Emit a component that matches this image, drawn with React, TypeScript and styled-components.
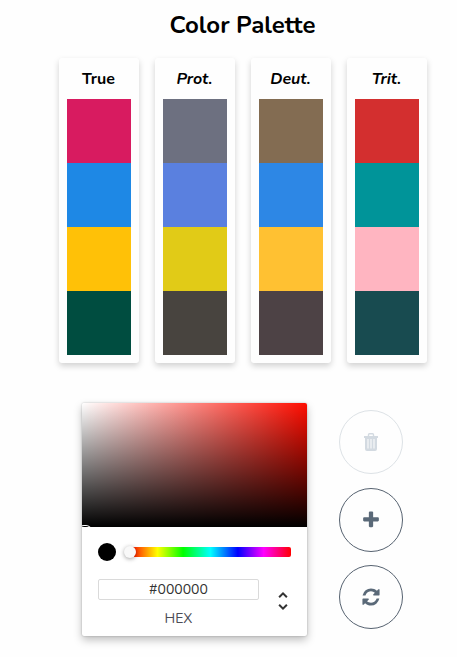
import React, { useState } from "react";
import styled, { createGlobalStyle } from "styled-components";

const GlobalStyle = createGlobalStyle`
  *, *::before, *::after { box-sizing: border-box; }
  body {
    margin: 0;
    background: #fefefe;
    color: #000;
    font-family: "Nunito", "Lato", "Noto Sans", sans-serif;
  }
`;

const Page = styled.main`
  display: flex;
  flex-direction: column;
  align-items: center;
  padding: 8px 0 20px 28px;
`;

const Title = styled.h1`
  margin: 0 0 16px;
  font-size: 24px;
  line-height: 34px;
  font-weight: 700;
`;

const Palettes = styled.section`
  display: flex;
  gap: 16px;
`;

const Card = styled.article`
  padding: 8px;
  border-radius: 3px;
  background: #fefefe;
  box-shadow: 0 3px 6px rgba(0, 0, 0, 0.18);
`;

const CardTitle = styled.h2<{ $simulated: boolean }>`
  margin: 0 0 7px;
  font-size: 16px;
  line-height: 26px;
  font-weight: 700;
  text-align: center;
  font-style: ${(p) => (p.$simulated ? "italic" : "normal")};
`;

const Swatch = styled.div<{ $color: string }>`
  width: 64px;
  height: 64px;
  background: ${(p) => p.$color};
`;

const Editor = styled.section`
  display: flex;
  gap: 32px;
  margin-top: 40px;
`;

const Picker = styled.div`
  width: 225px;
  border-radius: 2px;
  background: #fff;
  box-shadow: 0 0 2px rgba(0, 0, 0, 0.25), 0 4px 8px rgba(0, 0, 0, 0.25);
`;

const Saturation = styled.div`
  position: relative;
  height: 124px;
  overflow: hidden;
  border-radius: 2px 2px 0 0;
  background: linear-gradient(to top, #000, transparent),
    linear-gradient(to right, #fff, rgba(255, 255, 255, 0)), #fe0d00;
`;

const SaturationPointer = styled.span`
  position: absolute;
  left: -4px;
  bottom: -10px;
  width: 14px;
  height: 12px;
  border-radius: 6px;
  box-shadow: inset 0 0 0 1px #fff;
`;

const Controls = styled.div`
  padding: 16px 16px 7px;
`;

const HueRow = styled.div`
  display: flex;
  align-items: center;
  gap: 8px;
`;

const CurrentColor = styled.span`
  width: 18px;
  height: 18px;
  border-radius: 50%;
  background: #000;
`;

const HueSlider = styled.input`
  appearance: none;
  flex: 1;
  min-width: 0;
  height: 10px;
  margin: 0;
  border-radius: 2px;
  background: linear-gradient(to right, #f00, #ff0 17%, #0f0 33%, #0ff 50%, #00f 67%, #f0f 83%, #f00)
    right / calc(100% - 6px) 100% no-repeat;

  &::-webkit-slider-thumb {
    appearance: none;
    width: 12px;
    height: 12px;
    border-radius: 50%;
    background: #f8f8f8;
    box-shadow: 0 1px 4px rgba(0, 0, 0, 0.37);
  }
`;

const Fields = styled.div`
  display: flex;
  align-items: flex-start;
  justify-content: space-between;
  margin-top: 18px;
`;

const HexLabel = styled.label`
  display: flex;
  flex-direction: column;
  align-items: center;
  gap: 9px;
  width: 161px;
  color: #4c4c55;
  font-size: 14px;
  line-height: 20px;
`;

const HexInput = styled.input`
  width: 100%;
  height: 21px;
  padding: 0;
  border: 1px solid #dadada;
  border-radius: 2px;
  background: #fff;
  color: #333;
  font-family: inherit;
  font-size: 14px;
  text-align: center;
`;

const FormatButton = styled.button`
  display: flex;
  margin-right: -4px;
  padding: 10px 0 0;
  border: 0;
  background: none;
  color: #333;
`;

const Actions = styled.div`
  display: flex;
  flex-direction: column;
  justify-content: space-between;
  padding: 7px 0;
`;

const RoundButton = styled.button`
  display: flex;
  align-items: center;
  justify-content: center;
  width: 64px;
  height: 64px;
  padding: 0;
  border: 1px solid #566270;
  border-radius: 50%;
  background: transparent;
  color: #5a6978;

  &:disabled {
    border-color: #dde2e6;
    color: #d3dae1;
  }
`;

const palettes = [
  { name: "True", colors: ["#d81b60", "#1e88e5", "#ffc107", "#004d40"] },
  { name: "Prot.", colors: ["#6d7080", "#5a80df", "#e1cb17", "#48443f"] },
  { name: "Deut.", colors: ["#836c52", "#2d87e5", "#ffc132", "#4d4245"] },
  { name: "Trit.", colors: ["#d32f2f", "#009499", "#ffb5c1", "#184b50"] },
];

const icons = {
  plus: "M1600 736v192q0 40-28 68t-68 28h-416v416q0 40-28 68t-68 28h-192q-40 0-68-28t-28-68v-416h-416q-40 0-68-28t-28-68v-192q0-40 28-68t68-28h416v-416q0-40 28-68t68-28h192q40 0 68 28t28 68v416h416q40 0 68 28t28 68z",
  refresh:
    "M1639 1056q0 5-1 7-64 268-268 434.500t-478 166.500q-146 0-282.500-55t-243.500-157l-129 129q-19 19-45 19t-45-19-19-45v-448q0-26 19-45t45-19h448q26 0 45 19t19 45-19 45l-137 137q71 66 161 102t187 36q134 0 250-65t186-179q11-17 53-117 8-23 30-23h192q13 0 22.500 9.500t9.500 22.500zm25-800v448q0 26-19 45t-45 19h-448q-26 0-45-19t-19-45 19-45l138-138q-148-137-349-137-134 0-250 65t-186 179q-11 17-53 117-8 23-30 23h-199q-13 0-22.500-9.500t-9.500-22.500v-7q65-268 270-434.500t480-166.500q146 0 284 55.500t245 156.500l130-129q19-19 45-19t45 19 19 45z",
};

function Icon({ name }: { name: keyof typeof icons }) {
  return (
    <svg width="20" height="20" viewBox="0 0 1792 1792" fill="currentColor" aria-hidden="true">
      <path d={icons[name]} />
    </svg>
  );
}

function TrashIcon() {
  return (
    <svg width="14" height="18" viewBox="0 0 14 18" fill="none" aria-hidden="true">
      <path d="M4.500 3V1.700q0-.9.900-.9h3.200q.9 0 .9.900V3" stroke="currentColor" strokeWidth="1.400" />
      <path d="M0 3h14v2h-1v11q0 2-2 2H3q-2 0-2-2V5H0z" fill="currentColor" />
      <path d="M4 6v9.500M7 6v9.500M10 6v9.500" stroke="#fefefe" strokeWidth="1" />
    </svg>
  );
}

export default function App() {
  const [hex, setHex] = useState("#000000");
  const [hue, setHue] = useState(0);

  return (
    <>
      <GlobalStyle />
      <Page>
        <Title>Color Palette</Title>
        <Palettes>
          {palettes.map((palette, i) => (
            <Card key={palette.name}>
              <CardTitle $simulated={i > 0}>{palette.name}</CardTitle>
              {palette.colors.map((color) => (
                <Swatch key={color} $color={color} />
              ))}
            </Card>
          ))}
        </Palettes>
        <Editor>
          <Picker>
            <Saturation>
              <SaturationPointer />
            </Saturation>
            <Controls>
              <HueRow>
                <CurrentColor />
                <HueSlider
                  type="range"
                  min={0}
                  max={359}
                  value={hue}
                  aria-label="Hue"
                  onChange={(e) => setHue(Number(e.target.value))}
                />
              </HueRow>
              <Fields>
                <HexLabel>
                  <HexInput value={hex} onChange={(e) => setHex(e.target.value)} />
                  HEX
                </HexLabel>
                <FormatButton type="button" aria-label="Change color format">
                  <svg width="24" height="24" viewBox="0 0 24 24" fill="currentColor" aria-hidden="true">
                    <path d="M12 5.830L15.170 9l1.410-1.410L12 3 7.410 7.590 8.830 9zM12 18.170L8.830 15l-1.410 1.410L12 21l4.590-4.590L15.170 15z" />
                  </svg>
                </FormatButton>
              </Fields>
            </Controls>
          </Picker>
          <Actions>
            <RoundButton type="button" aria-label="Delete color" disabled>
              <TrashIcon />
            </RoundButton>
            <RoundButton type="button" aria-label="Add color">
              <Icon name="plus" />
            </RoundButton>
            <RoundButton type="button" aria-label="Reset colors">
              <Icon name="refresh" />
            </RoundButton>
          </Actions>
        </Editor>
      </Page>
    </>
  );
}
